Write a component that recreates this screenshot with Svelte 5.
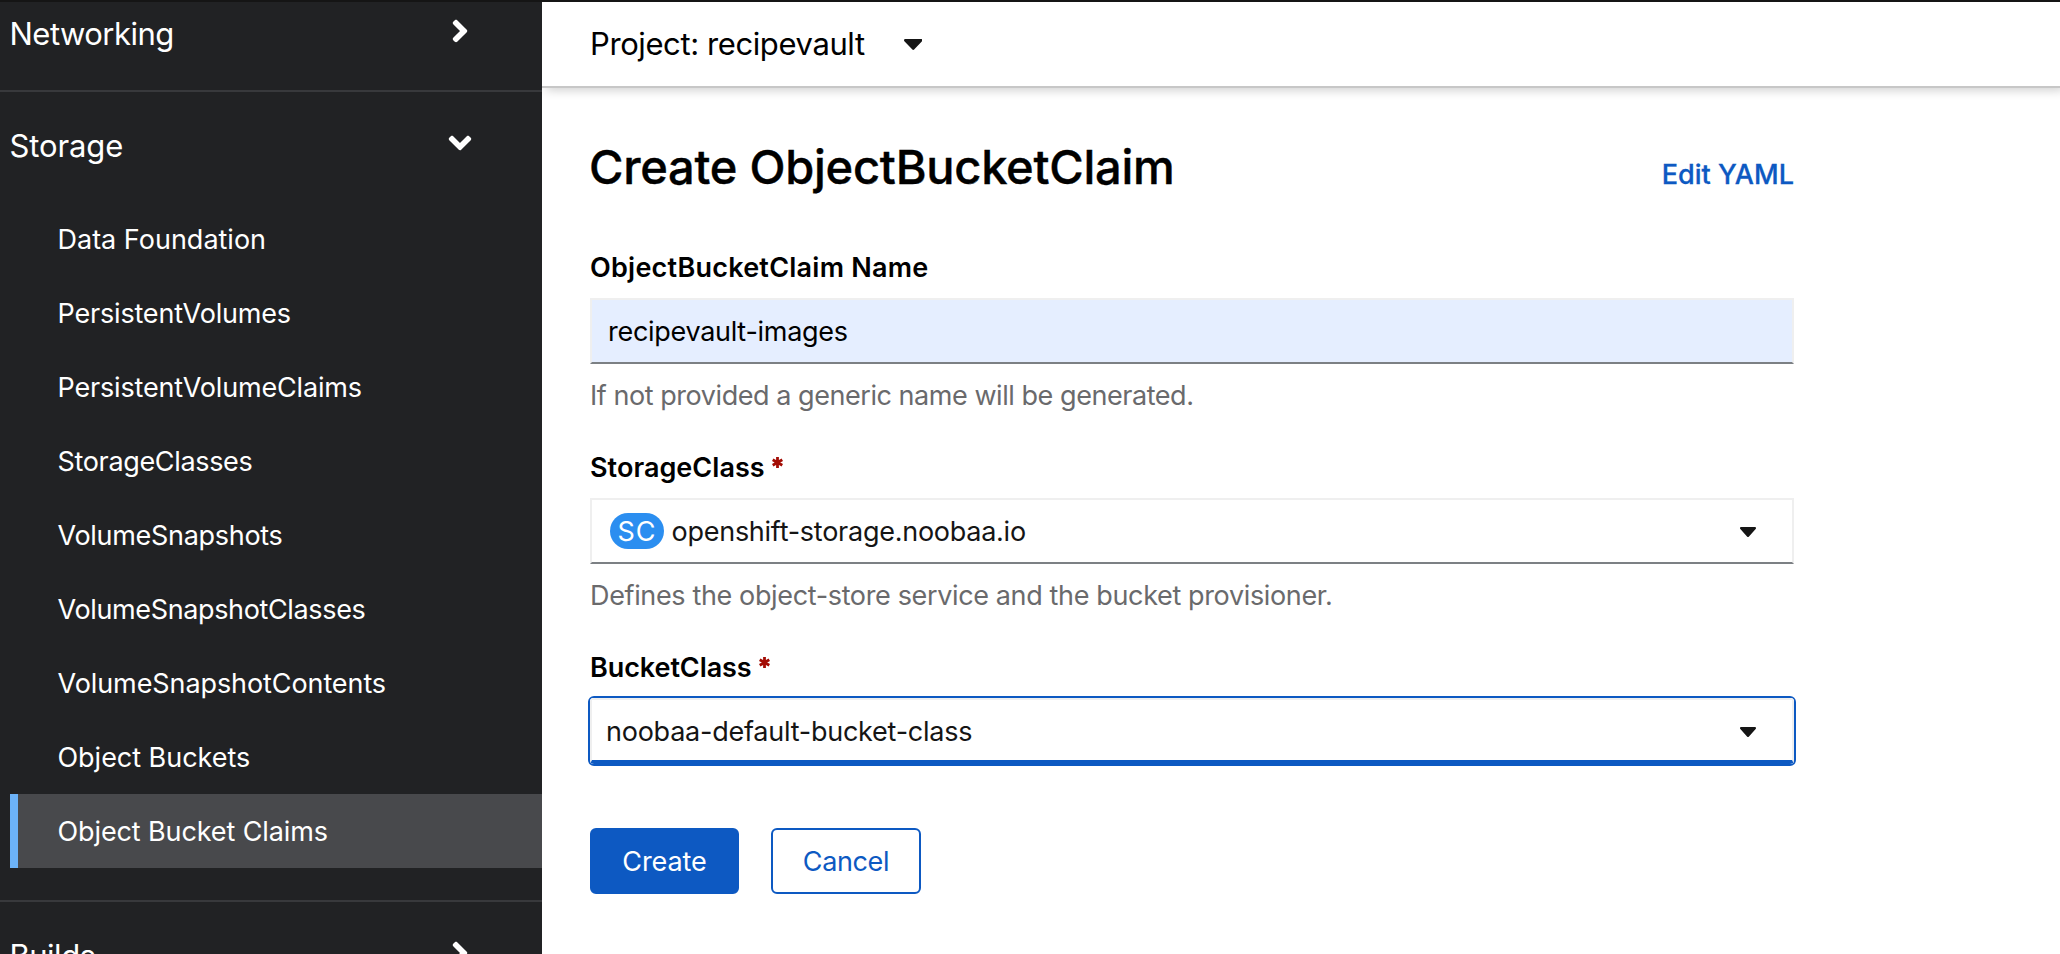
<script>
  const sections = [
    { title: 'Networking', spacing: -0.52, open: false, items: [] },
    {
      title: 'Storage', spacing: -0.12, open: true,
      items: [
        { label: 'Data Foundation', spacing: 0 },
        { label: 'PersistentVolumes', spacing: -0.18 },
        { label: 'PersistentVolumeClaims', spacing: -0.17 },
        { label: 'StorageClasses', spacing: -0.34 },
        { label: 'VolumeSnapshots', spacing: -0.3 },
        { label: 'VolumeSnapshotClasses', spacing: -0.36 },
        { label: 'VolumeSnapshotContents', spacing: -0.09 },
        { label: 'Object Buckets', spacing: -0.03 },
        { label: 'Object Bucket Claims', spacing: -0.11, current: true }
      ]
    },
    { title: 'Builds', spacing: -0.5, open: false, items: [] }
  ];
</script>

{#snippet caret()}
  <svg class="caret" viewBox="11 192 298 169" preserveAspectRatio="none" aria-hidden="true">
    <path d="M31.3 192h257.3c17.8 0 26.7 21.5 14.1 34.1L174.1 354.7c-7.8 7.8-20.5 7.8-28.3 0L17.2 226.1C4.6 213.5 13.5 192 31.3 192z" />
  </svg>
{/snippet}

{#snippet required()}
  <svg class="required" viewBox="-5.5 -5.5 11 11" aria-hidden="true">
    <path d="M0-5.5V5.5M-4.8-2.75L4.8 2.75M-4.8 2.75L4.8-2.75" />
  </svg>
{/snippet}

<div class="page">
  <div class="masthead"></div>
  <nav class="sidebar">
    <div class="sections">
      {#each sections as section}
        <section>
          <button class="heading" aria-expanded={section.open}>
            <span style="letter-spacing: {section.spacing}px">{section.title}</span>
            <svg class="angle" class:open={section.open} viewBox="0 0 256 512" aria-hidden="true">
              <path d="M224.3 273l-136 136c-9.4 9.4-24.6 9.4-33.9 0l-22.6-22.6c-9.4-9.4-9.4-24.6 0-33.9l96.4-96.4-96.4-96.4c-9.4-9.4-9.4-24.6 0-33.9L54.3 103c9.4-9.4 24.6-9.4 33.9 0l136 136c9.5 9.4 9.5 24.6.1 34z" />
            </svg>
          </button>
          {#if section.open}
            <ul>
              {#each section.items as item}
                <li class:current={item.current}><span style="letter-spacing: {item.spacing}px">{item.label}</span></li>
              {/each}
            </ul>
          {/if}
        </section>
      {/each}
    </div>
  </nav>

  <main>
    <header class="project">
      <span>Project: recipevault</span>
      {@render caret()}
    </header>

    <div class="content">
      <div class="title">
        <h1>Create ObjectBucketClaim</h1>
        <span class="yaml">Edit YAML</span>
      </div>

      <div class="field">
        <div class="label name">ObjectBucketClaim Name</div>
        <div class="control filled"><span class="value">recipevault-images</span></div>
        <div class="help generated">If not provided a generic name will be generated.</div>
      </div>

      <div class="field">
        <div class="label storage">StorageClass {@render required()}</div>
        <div class="control">
          <span class="badge">SC</span>
          <span class="value provisioner">openshift-storage.noobaa.io</span>
          {@render caret()}
        </div>
        <div class="help">Defines the object-store service and the bucket provisioner.</div>
      </div>

      <div class="field">
        <div class="label bucket">BucketClass {@render required()}</div>
        <div class="ring">
          <div class="control focused">
            <span class="value bucket-value">noobaa-default-bucket-class</span>
            {@render caret()}
          </div>
        </div>
      </div>

      <div class="actions">
        <button class="primary">Create</button>
        <button class="secondary">Cancel</button>
      </div>
    </div>
  </main>
</div>

<style>
  .page {
    display: grid;
    grid-template: 2px 952px / 542px 1fr;
    width: 2060px;
    height: 954px;
    overflow: hidden;
    background: #fff;
    color: #000;
    font-family: Inter, 'Liberation Sans', sans-serif;
    font-size: 27px;
  }

  .masthead {
    grid-column: 1 / -1;
    background: #151515;
  }

  button {
    margin: 0;
    font: inherit;
    letter-spacing: inherit;
  }

  .sidebar {
    overflow: hidden;
    background: #212224;
    color: #fff;
  }

  .sections {
    margin-top: -22px;
  }

  section + section {
    border-top: 2px solid #38393c;
  }

  .heading {
    display: flex;
    align-items: center;
    justify-content: space-between;
    box-sizing: border-box;
    width: 542px;
    height: 110px;
    padding: 0 73px 8px 9.5px;
    border: 0;
    background: none;
    color: #fff;
    font-size: 31px;
    line-height: 40px;
  }

  .heading span {
    padding-top: 5px;
  }

  .angle {
    width: 18px;
    height: 36px;
    fill: currentColor;
  }

  .angle.open {
    transform: rotate(90deg);
  }

  ul {
    margin: 0;
    padding: 0 0 32px 10px;
    list-style: none;
  }

  li {
    height: 74px;
    padding-left: 47.5px;
    line-height: 76px;
    white-space: nowrap;
  }

  .current {
    padding-left: 39.5px;
    border-left: 8px solid #6cb2f7;
    background: #48494c;
  }

  .project {
    display: flex;
    align-items: center;
    height: 84px;
    padding-left: 48px;
    gap: 39px;
    border-bottom: 2px solid #c7c7c7;
    box-shadow: 4px 2px 10px rgba(3, 3, 3, 0.2);
    font-size: 31px;
    letter-spacing: -0.4px;
    clip-path: inset(0 0 -20px 0);
  }

  .project span {
    padding-bottom: 2px;
  }

  .project .caret {
    width: 18.5px;
    height: 11px;
  }

  .caret {
    display: block;
    width: 16px;
    height: 10px;
    fill: #151515;
  }

  .content {
    width: 1204px;
    padding: 48px 0 0 48px;
  }

  .title {
    display: flex;
    justify-content: space-between;
    align-items: baseline;
    height: 112px;
    line-height: 62px;
  }

  h1 {
    margin: 0 0 0 -1px;
    font-size: 47px;
    font-weight: 500;
    letter-spacing: -0.25px;
    -webkit-text-stroke: 0.4px currentColor;
  }

  .yaml {
    color: #0d59c2;
    font-weight: 500;
    letter-spacing: 0.03px;
    -webkit-text-stroke: 0.3px currentColor;
  }

  .field {
    height: 200px;
  }

  .label {
    display: flex;
    height: 40px;
    padding-bottom: 10px;
    font-weight: 600;
    line-height: 40px;
  }

  .name {
    letter-spacing: 0.24px;
  }

  .storage {
    letter-spacing: 0.04px;
  }

  .bucket {
    letter-spacing: -0.08px;
  }

  .required {
    width: 11px;
    height: 11px;
    margin: 9px 0 0 7px;
    fill: none;
    stroke: #a30d05;
    stroke-width: 2.8;
  }

  .control {
    display: flex;
    align-items: center;
    box-sizing: border-box;
    height: 66px;
    padding: 0 36px 0 16px;
    border: 2px solid #efefef;
    border-bottom-color: #7c8084;
    color: #151515;
    line-height: 60px;
  }

  .control .caret {
    margin: 2px 0 0 auto;
  }

  .filled {
    background: #e5eeff;
    color: #000;
  }

  .value {
    padding-top: 2px;
    letter-spacing: -0.29px;
  }

  .provisioner {
    margin-left: 7.5px;
    letter-spacing: -0.26px;
  }

  .badge {
    width: 54px;
    height: 36px;
    margin-left: 2px;
    border-radius: 18px;
    background: #2b8ef0;
    color: #fff;
    letter-spacing: 1px;
    line-height: 38px;
    text-align: center;
  }

  .ring {
    margin: -2px;
    border: 2px solid #0d59c2;
    border-radius: 6px;
    overflow: hidden;
    background: #0d59c2;
  }

  .focused {
    padding-left: 14px;
    border-bottom: 4px solid #0d59c2;
    background: #fff;
    line-height: 56px;
  }

  .focused .caret {
    margin-top: 4px;
  }

  .focused .value {
    padding-top: 4px;
    letter-spacing: -0.24px;
  }

  .help {
    height: 64px;
    color: #6a6a6c;
    letter-spacing: -0.36px;
    line-height: 64px;
    white-space: nowrap;
  }

  .generated {
    letter-spacing: -0.45px;
  }

  .actions {
    display: flex;
    gap: 32px;
    margin-top: -20px;
  }

  .actions button {
    box-sizing: border-box;
    width: 149px;
    height: 66px;
    padding: 2px 0 0;
    border: 2px solid #0d59c2;
    border-radius: 6px;
    line-height: 60px;
  }

  .actions .primary {
    background: #0d59c2;
    color: #fff;
    letter-spacing: -0.1px;
  }

  .actions .secondary {
    width: 150px;
    background: #fff;
    color: #0d59c2;
    letter-spacing: -0.38px;
  }
</style>
